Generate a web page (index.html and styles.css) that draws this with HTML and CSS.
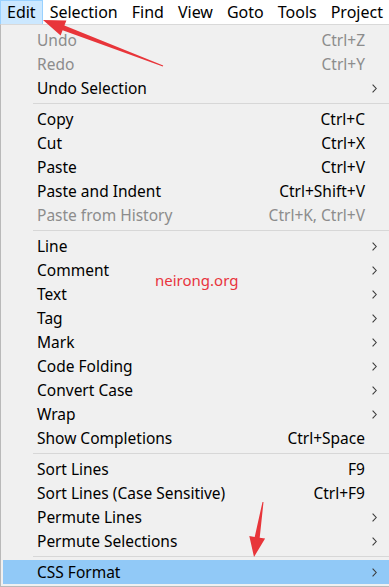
FILE: index.html
```html
<!DOCTYPE html>
<html lang="en">
<head>
    <meta charset="UTF-8">
    <meta name="viewport" content="width=device-width, initial-scale=1.0">
    <title>Edit Menu</title>
    <link rel="stylesheet" href="styles.css">
</head>
<body>
    <!-- Menu bar -->
    <div class="menubar">
        <span class="menubar-item active">Edit</span>
        <span class="menubar-item">Selection</span>
        <span class="menubar-item">Find</span>
        <span class="menubar-item">View</span>
        <span class="menubar-item">Goto</span>
        <span class="menubar-item">Tools</span>
        <span class="menubar-item">Project</span>
    </div>

    <!-- Edit dropdown -->
    <div class="menu">
        <div class="item disabled"><span class="label">Undo</span><span class="key">Ctrl+Z</span><span class="sub"></span></div>
        <div class="item disabled"><span class="label">Redo</span><span class="key">Ctrl+Y</span><span class="sub"></span></div>
        <div class="item"><span class="label">Undo Selection</span><span class="key"></span><span class="sub"><svg width="5" height="9" viewBox="0 0 5 9"><path d="M0.6 0.6 L4.2 4.5 L0.6 8.4" /></svg></span></div>
        <div class="sep"></div>

        <div class="item"><span class="label">Copy</span><span class="key">Ctrl+C</span><span class="sub"></span></div>
        <div class="item"><span class="label">Cut</span><span class="key">Ctrl+X</span><span class="sub"></span></div>
        <div class="item"><span class="label">Paste</span><span class="key">Ctrl+V</span><span class="sub"></span></div>
        <div class="item"><span class="label">Paste and Indent</span><span class="key">Ctrl+Shift+V</span><span class="sub"></span></div>
        <div class="item disabled"><span class="label">Paste from History</span><span class="key">Ctrl+K, Ctrl+V</span><span class="sub"></span></div>
        <div class="sep"></div>

        <div class="item"><span class="label">Line</span><span class="key"></span><span class="sub"><svg width="5" height="9" viewBox="0 0 5 9"><path d="M0.6 0.6 L4.2 4.5 L0.6 8.4" /></svg></span></div>
        <div class="item"><span class="label">Comment</span><span class="key"></span><span class="sub"><svg width="5" height="9" viewBox="0 0 5 9"><path d="M0.6 0.6 L4.2 4.5 L0.6 8.4" /></svg></span></div>
        <div class="item"><span class="label">Text</span><span class="key"></span><span class="sub"><svg width="5" height="9" viewBox="0 0 5 9"><path d="M0.6 0.6 L4.2 4.5 L0.6 8.4" /></svg></span></div>
        <div class="item"><span class="label">Tag</span><span class="key"></span><span class="sub"><svg width="5" height="9" viewBox="0 0 5 9"><path d="M0.6 0.6 L4.2 4.5 L0.6 8.4" /></svg></span></div>
        <div class="item"><span class="label">Mark</span><span class="key"></span><span class="sub"><svg width="5" height="9" viewBox="0 0 5 9"><path d="M0.6 0.6 L4.2 4.5 L0.6 8.4" /></svg></span></div>
        <div class="item"><span class="label">Code Folding</span><span class="key"></span><span class="sub"><svg width="5" height="9" viewBox="0 0 5 9"><path d="M0.6 0.6 L4.2 4.5 L0.6 8.4" /></svg></span></div>
        <div class="item"><span class="label">Convert Case</span><span class="key"></span><span class="sub"><svg width="5" height="9" viewBox="0 0 5 9"><path d="M0.6 0.6 L4.2 4.5 L0.6 8.4" /></svg></span></div>
        <div class="item"><span class="label">Wrap</span><span class="key"></span><span class="sub"><svg width="5" height="9" viewBox="0 0 5 9"><path d="M0.6 0.6 L4.2 4.5 L0.6 8.4" /></svg></span></div>
        <div class="item"><span class="label">Show Completions</span><span class="key">Ctrl+Space</span><span class="sub"></span></div>
        <div class="sep"></div>

        <div class="item"><span class="label">Sort Lines</span><span class="key">F9</span><span class="sub"></span></div>
        <div class="item"><span class="label">Sort Lines (Case Sensitive)</span><span class="key">Ctrl+F9</span><span class="sub"></span></div>
        <div class="item"><span class="label">Permute Lines</span><span class="key"></span><span class="sub"><svg width="5" height="9" viewBox="0 0 5 9"><path d="M0.6 0.6 L4.2 4.5 L0.6 8.4" /></svg></span></div>
        <div class="item"><span class="label">Permute Selections</span><span class="key"></span><span class="sub"><svg width="5" height="9" viewBox="0 0 5 9"><path d="M0.6 0.6 L4.2 4.5 L0.6 8.4" /></svg></span></div>
        <div class="sep"></div>

        <div class="item hover"><span class="label">CSS Format</span><span class="key"></span><span class="sub"><svg width="5" height="9" viewBox="0 0 5 9"><path d="M0.6 0.6 L4.2 4.5 L0.6 8.4" /></svg></span></div>
    </div>

    <!-- Annotations drawn over the screenshot -->
    <span class="watermark">neirong.org</span>
    <svg class="arrows" width="389" height="587" viewBox="0 0 389 587">
        <polygon points="163.2,65.5 64.4,25.6 66.4,20.4 43,20 60.6,35.4 62.6,30.2 162.8,66.5" />
        <polygon points="262.5,501.9 254.7,536.9 249.3,536 254,557 265.1,538.6 259.7,537.7 263.5,502.1" />
    </svg>
</body>
</html>
```

FILE: styles.css
```css
/* General */

body {
    margin: 0;
    width: 389px;
    height: 587px;
    overflow: hidden;
    position: relative;
    background-color: #ffffff;
    font-family: "Noto Sans", "Open Sans", sans-serif;
    font-size: 15.5px;
    color: #000;
}

/* Menu bar */
.menubar {
    display: flex;
    height: 24px;
    background-color: #ffffff;
    font-size: 16px;
}

.menubar-item {
    padding: 0 6px;
    line-height: 23px;
    border: 1px solid transparent;
    border-bottom: 0;
    white-space: nowrap;
}

.menubar-item.active {
    background-color: #cce8ff;
    border-color: #99d1ff;
}

/* Dropdown */
.menu {
    border-top: 1px solid #d9d9d9;
    border-left: 1px solid #b9b9b9;
    border-bottom: 1px solid #b9b9b9;
    background-color: #f0f0f0;
    padding: 3px 0 2px 2px;
}

.item {
    display: flex;
    align-items: center;
    height: 24px;
    padding-left: 34px;
    white-space: nowrap;
}

.item .label {
    flex: 1;
}

.item .key {
    text-align: right;
}

.item .sub {
    width: 24px;
    flex-shrink: 0;
    display: flex;
    align-items: center;
    padding-left: 7px;
    box-sizing: border-box;
}

.item .sub svg path {
    fill: none;
    stroke: #3c3c3c;
    stroke-width: 1.1;
}

.item.disabled {
    color: #8c8c8c;
}

.item.hover {
    background-color: #91c9f7;
}

.sep {
    height: 1px;
    margin: 3px 0 3px 30px;
    background-color: #d7d7d7;
}

/* Annotations */
.watermark {
    position: absolute;
    left: 155px;
    top: 270px;
    color: #e8343d;
    font-size: 15px;
}

.arrows {
    position: absolute;
    left: 0;
    top: 0;
    pointer-events: none;
}

.arrows polygon {
    fill: #e8353a;
}
```
